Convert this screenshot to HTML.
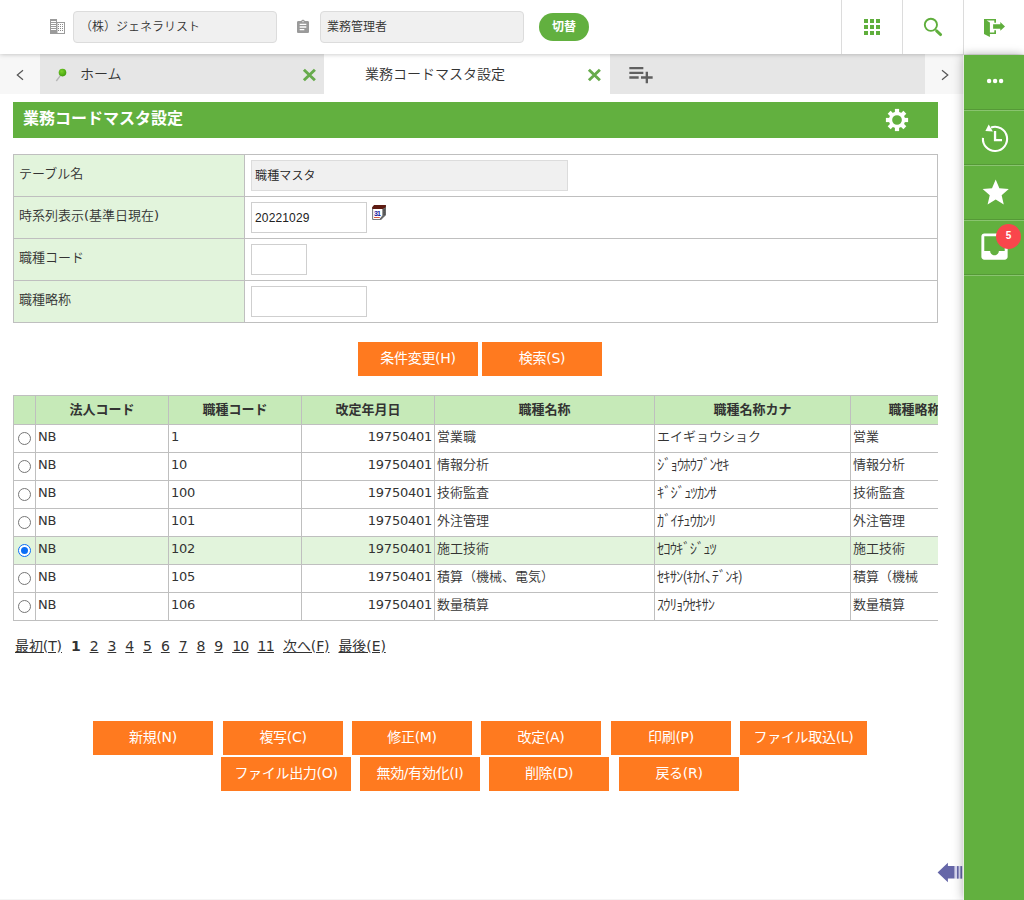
<!DOCTYPE html>
<html lang="ja">
<head>
<meta charset="utf-8">
<title>業務コードマスタ設定</title>
<style>
*{box-sizing:border-box;margin:0;padding:0}
html,body{width:1024px;height:900px;overflow:hidden;background:#fff}
body{font-family:"Liberation Sans","Noto Sans CJK JP",sans-serif;color:#333;font-size:13px;position:relative}
.abs{position:absolute}
/* header */
#hdr{position:absolute;left:0;top:0;width:1024px;height:54px;background:#fff;z-index:5;box-shadow:0 0 5px rgba(0,0,0,.26)}
.hin{position:absolute;top:11px;height:32px;background:#f0f0f0;border:1px solid #dcdcdc;border-radius:4px;font-size:12px;line-height:30px;padding-left:6px;color:#333;white-space:nowrap}
#sw{position:absolute;left:539px;top:13px;width:50px;height:28px;border-radius:14px;background:#62b03f;color:#fff;font-weight:bold;font-size:12px;line-height:29px;text-align:center}
.vdiv{position:absolute;top:0;width:1px;height:54px;background:#dcdcdc}
/* tab bar */
#tabs{position:absolute;left:0;top:54px;width:964px;height:40px;background:#e6e6e6;z-index:2}
.nav{position:absolute;top:0;width:40px;height:40px;background:#f7f7f7}
.tab{position:absolute;top:0;height:40px;font-size:15px;line-height:41.5px;color:#333;white-space:nowrap}
/* sidebar */
#side{position:absolute;left:964px;top:55px;width:60px;height:845px;background:#62b03f;z-index:6;box-shadow:-2px 0 10px rgba(0,0,0,.22),0 -2px 6px rgba(0,0,0,.08)}
#sin{position:absolute;left:0;top:-1px;width:60px;height:846px}
#side:before{content:"";position:absolute;left:-1px;top:0;width:1px;height:846px;background:rgba(235,245,228,.75)}
.sdiv{position:absolute;left:0;width:60px;height:2px;background:linear-gradient(rgba(0,0,0,.13) 50%,rgba(255,255,255,.25) 50%)}
/* title */
#ttl{position:absolute;left:13px;top:102px;width:925px;height:36px;background:#62b03f;color:#fff;font-weight:bold;font-size:16px;line-height:33px;padding-left:10px}

/* form */
#frm{position:absolute;left:13px;top:154px;width:925px;height:169px;border:1px solid #bfbfbf;background:#fff}
.fr{position:absolute;left:0;width:923px;height:42px;border-top:1px solid #bfbfbf}
.fl{position:absolute;left:0;top:0;width:231px;height:41px;background:#e2f4dc;border-right:1px solid #bfbfbf;font-size:13px;line-height:37.5px;padding-left:5px;color:#333;white-space:nowrap;font-family:"DejaVu Sans","Liberation Sans","Noto Sans CJK JP",sans-serif}
.fi{position:absolute;top:5px;height:31px;border:1px solid #cfcfcf;background:#fff;font-size:12px;line-height:30px;padding-left:3px;letter-spacing:0.15px;color:#222;white-space:nowrap}
.ob{position:absolute;height:34px;background:#ff7a1f;color:#fff;font-size:14px;line-height:32px;text-align:center;white-space:nowrap;font-family:"DejaVu Sans","Liberation Sans","Noto Sans CJK JP",sans-serif;letter-spacing:-0.3px}

/* grid */
#gw{position:absolute;left:13px;top:395px;width:925px;height:227px;overflow:hidden}
#grid{border-collapse:collapse;table-layout:fixed;width:1100px;font-size:13px;color:#333;font-family:"DejaVu Sans","Liberation Sans","Noto Sans CJK JP",sans-serif}
#grid th{height:29px;background:#c6eab8;border:1px solid #bfbfbf;font-weight:bold;font-size:13px;text-align:center;padding:0 0 4px 0;letter-spacing:0;white-space:nowrap;overflow:hidden}
#grid td{height:28px;border:1px solid #bfbfbf;padding:0 2px 4px 2px;white-space:nowrap;overflow:hidden;vertical-align:middle;font-size:13px}
#grid td.r{text-align:right}
#grid td:nth-child(-n+4){letter-spacing:-0.25px}
#grid td:nth-child(n+5){padding-bottom:7px}
#grid tr.sel td{background:#e2f4dc}
.rad{display:block;width:13px;height:13px;border:1px solid #767676;border-radius:50%;background:#fff;margin:0 0 1px 4px}
.rad.on{border:1px solid #0b6ef5;position:relative}
.rad.on:after{content:"";position:absolute;left:2px;top:2px;width:7px;height:7px;border-radius:50%;background:#0b6ef5}
#grid td.hk{font-size:14.5px;letter-spacing:-0.9px;padding-bottom:6px}
/* pager */
#pg{position:absolute;left:15px;top:634.7px;font-size:14px;line-height:22px;color:#333;white-space:nowrap;font-family:"DejaVu Sans","Liberation Sans","Noto Sans CJK JP",sans-serif;letter-spacing:-0.1px}
#pg span{text-decoration:underline;margin-right:9px}
#pg b{margin-right:9px;text-decoration:none}

/* lighter CJK weight where text is CJK-only (Meiryo-like thin strokes) */
.hin,.tab,.fl,.fi,#grid td:nth-child(n+5){font-weight:350}
.w4{font-weight:400}
#grid td.hk{font-family:"Noto Sans CJK JP",sans-serif}
</style>
</head>
<body>
<div id="hdr">
  <div class="hin" style="left:73px;width:204px">（株）ジェネラリスト</div>
  <div class="hin" style="left:320px;width:204px">業務管理者</div>
  <div id="sw">切替</div>

  <svg class="abs" style="left:50px;top:19px" width="15" height="15" viewBox="0 0 15 15"><rect x="0" y="0" width="7" height="15" fill="#9b9b9b"/><g fill="#fff"><rect x="1" y="2" width="5" height="1"/><rect x="1" y="4" width="5" height="1"/><rect x="1" y="6" width="5" height="1"/><rect x="1" y="8" width="5" height="1"/><rect x="1" y="10" width="5" height="1"/></g><rect x="7" y="3.5" width="7.5" height="11" fill="#fff" stroke="#9b9b9b" stroke-width="1"/><g fill="#8a8a8a"><rect x="8" y="5" width="1" height="1"/><rect x="10" y="5" width="1" height="1"/><rect x="12" y="5" width="1" height="1"/><rect x="8" y="7" width="1" height="1"/><rect x="10" y="7" width="1" height="1"/><rect x="12" y="7" width="1" height="1"/><rect x="8" y="9" width="1" height="1"/><rect x="10" y="9" width="1" height="1"/><rect x="12" y="9" width="1" height="1"/><rect x="8" y="11" width="1" height="1"/><rect x="10" y="11" width="1" height="1"/><rect x="12" y="11" width="1" height="1"/></g></svg>
  <svg class="abs" style="left:295px;top:19.3px" width="16" height="16" viewBox="0 0 24 24"><path fill="#9a9a9a" d="M19 3h-4.18C14.4 1.84 13.3 1 12 1c-1.3 0-2.4.84-2.82 2H5c-1.1 0-2 .9-2 2v14c0 1.1.9 2 2 2h14c1.1 0 2-.9 2-2V5c0-1.1-.9-2-2-2zm-7 0c.55 0 1 .45 1 1s-.45 1-1 1-1-.45-1-1 .45-1 1-1zm2 14H7v-2h7v2zm3-4H7v-2h10v2zm0-4H7V7h10v2z"/></svg>
  <svg class="abs" style="left:860px;top:15px" width="24" height="24" viewBox="0 0 24 24"><g fill="#5fae3c"><rect x="4" y="4" width="4" height="4"/><rect x="10" y="4" width="4" height="4"/><rect x="16" y="4" width="4" height="4"/><rect x="4" y="10" width="4" height="4"/><rect x="10" y="10" width="4" height="4"/><rect x="16" y="10" width="4" height="4"/><rect x="4" y="16" width="4" height="4"/><rect x="10" y="16" width="4" height="4"/><rect x="16" y="16" width="4" height="4"/></g></svg>
  <svg class="abs" style="left:917px;top:10px" width="32" height="34" viewBox="0 0 32 34"><circle cx="13.9" cy="14.8" r="6.1" fill="none" stroke="#5fae3c" stroke-width="1.9"/><path d="M19.6 20.9 L23.6 24.6" stroke="#5fae3c" stroke-width="2.9" stroke-linecap="round"/></svg>
  <svg class="abs" style="left:978px;top:10px" width="32" height="34" viewBox="0 0 32 34"><path fill="#5fae3c" d="M6 8.9 H18 V12.7 H16.3 V10.6 H8.6 L11.9 12.6 V22.4 H16.3 V20.2 H18 V24.1 H11.9 V27 L6 24.1 Z"/><path fill="#5fae3c" d="M15.1 14.2 H22.3 V12.1 L27 16.4 L22.3 20.7 V18.7 H15.1 Z"/></svg>
  <div class="vdiv" style="left:841px"></div>
  <div class="vdiv" style="left:902px"></div>
  <div class="vdiv" style="left:963px"></div>
</div>
<div id="tabs">
  <div class="nav" style="left:0"></div>
  <div class="tab" style="left:40px;width:284px;padding-left:40px;font-size:14px">ホーム</div>
  <div class="tab" style="left:324px;width:286px;background:#fff;padding-left:41px;font-size:14px">業務コードマスタ設定</div>
  <div class="nav" style="left:925px;width:39px"></div>
  <svg class="abs" style="left:0;top:0" width="40" height="40" viewBox="0 0 40 40"><path d="M23 16.2 L17.3 21 L23 25.8" fill="none" stroke="#555" stroke-width="1.2"/></svg>
  <svg class="abs" style="left:924px;top:0" width="39" height="40" viewBox="0 0 39 40"><path d="M18 16.2 L23.8 21 L18 25.8" fill="none" stroke="#555" stroke-width="1.2"/></svg>
  <svg class="abs" style="left:52px;top:12px" width="18" height="18" viewBox="0 0 18 18"><defs><radialGradient id="pg1" cx="40%" cy="35%" r="70%"><stop offset="0" stop-color="#7ad12a"/><stop offset="1" stop-color="#3f9a0c"/></radialGradient></defs><path d="M9.3 8.3 L4.3 15" stroke="#b5b5b5" stroke-width="1.3"/><circle cx="10.5" cy="6.6" r="3.8" fill="url(#pg1)"/></svg>
  <svg class="abs" style="left:302px;top:14px" width="15" height="14" viewBox="0 0 15 14"><path d="M1.9 1.7 L12.9 12.3 M12.9 1.7 L1.9 12.3" stroke="#67ab4c" stroke-width="2.9"/></svg>
  <svg class="abs" style="left:587px;top:14px" width="15" height="14" viewBox="0 0 15 14"><path d="M1.9 1.7 L12.9 12.3 M12.9 1.7 L1.9 12.3" stroke="#67ab4c" stroke-width="2.9"/></svg>
  <svg class="abs" style="left:626.7px;top:6.1px" width="28" height="28" viewBox="0 0 24 24"><path fill="#606060" d="M14 10H2v2h12v-2zm0-4H2v2h12V6zm4 8v-4h-2v4h-4v2h4v4h2v-4h4v-2h-4zM2 16h8v-2H2v2z"/></svg>

</div>
<div id="side"><div id="sin">
  <svg class="abs" style="left:-1px;top:0" width="61" height="230" viewBox="0 0 61 230"><g fill="#fff"><circle cx="26.1" cy="27" r="2.2"/><circle cx="32.1" cy="27" r="2.2"/><circle cx="38.1" cy="27" r="2.2"/></g>
  <g fill="none" stroke="#fff" stroke-width="2.1"><path d="M28 73.5 A12.1 12.1 0 1 1 19.95 83.85"/><path d="M32.05 76.9 V86.1 H39" stroke-width="2.3"/></g><path fill="#fff" d="M22.4 77 L25.7 70.5 L29.9 77.4 Z"/></svg>
  <svg class="abs" style="left:15.9px;top:123px" width="31.4" height="31.4" viewBox="0 0 24 24"><path fill="#fff" d="M12 17.27L18.18 21l-1.64-7.03L22 9.24l-7.19-.61L12 2 9.19 8.63 2 9.24l5.46 4.73L5.82 21z"/></svg>
  <svg class="abs" style="left:13.1px;top:175px" width="35" height="35" viewBox="0 0 24 24"><path fill="#fff" d="M19 3H4.99c-1.11 0-1.98.89-1.98 2L3 19c0 1.1.88 2 1.99 2H19c1.1 0 2-.9 2-2V5c0-1.11-.9-2-2-2zm0 12h-4c0 1.66-1.35 3-3 3s-3-1.34-3-3H4.99V5H19v10z"/></svg>
  <div class="abs" style="left:32.1px;top:170px;width:25px;height:25px;border-radius:50%;background:#f9464c;color:#fff;font-size:10px;font-weight:bold;line-height:24.5px;text-align:center;font-family:'Liberation Sans',sans-serif">5</div>

  <div class="sdiv" style="top:55px"></div>
  <div class="sdiv" style="top:110px"></div>
  <div class="sdiv" style="top:165px"></div>
  <div class="sdiv" style="top:220px"></div>
</div></div>
<div id="ttl">業務コードマスタ設定</div>
<div id="frm">
  <div class="fr" style="top:0;border-top:none;height:41px"><div class="fl" style="height:41px;line-height:38px">テーブル名</div><div class="fi" style="left:237px;width:317px;background:#f0f0f0;border-color:#dcdcdc;font-size:12px;top:5px">職種マスタ</div></div>
  <div class="fr" style="top:41px"><div class="fl">時系列表示<span class="w4">(</span>基準日現在<span class="w4">)</span></div><div class="fi" style="left:237px;width:116px">20221029</div></div>
  <div class="fr" style="top:83px"><div class="fl">職種コード</div><div class="fi" style="left:237px;width:56px"></div></div>
  <div class="fr" style="top:125px"><div class="fl">職種略称</div><div class="fi" style="left:237px;width:116px"></div></div>
</div>
<div class="ob" style="left:358px;top:342px;width:120px">条件変更(H)</div>
<div class="ob" style="left:482px;top:342px;width:120px">検索(S)</div>
<svg class="abs" style="left:885px;top:108px" width="24" height="24" viewBox="-12 -12 24 24"><g fill="#fff"><rect x="-2.1" y="-11.1" width="4.2" height="5" transform="rotate(0)"/><rect x="-2.1" y="-11.1" width="4.2" height="5" transform="rotate(45)"/><rect x="-2.1" y="-11.1" width="4.2" height="5" transform="rotate(90)"/><rect x="-2.1" y="-11.1" width="4.2" height="5" transform="rotate(135)"/><rect x="-2.1" y="-11.1" width="4.2" height="5" transform="rotate(180)"/><rect x="-2.1" y="-11.1" width="4.2" height="5" transform="rotate(225)"/><rect x="-2.1" y="-11.1" width="4.2" height="5" transform="rotate(270)"/><rect x="-2.1" y="-11.1" width="4.2" height="5" transform="rotate(315)"/></g><circle r="6.5" fill="none" stroke="#fff" stroke-width="3.3"/></svg>
<svg class="abs" style="left:372px;top:204px" width="15" height="16" viewBox="0 0 15 16"><path d="M0.3 3.2 L2.2 0.9 H13.8 V11 L9 15.8 H0.3 Z" fill="#4d4d4d"/><path d="M0.3 3.2 L2.2 0.9 H13.8 V3.2 L11 5 H0.3 Z" fill="#5e1b12"/><path d="M1.1 5 H10.6 V11.5 L7.8 14.9 H1.1 Z" fill="#fff"/><path d="M10.6 5 L13.8 3.2 V11 L9 15.8 L7.8 14.9 L10.6 11.5 Z" fill="#6a6a6a"/><g fill="#2b2b2b"><rect x="11.6" y="5.6" width="1" height="1"/><rect x="11.6" y="7.6" width="1" height="1"/><rect x="11.6" y="9.6" width="1" height="1"/></g><rect x="2" y="13.1" width="5.8" height="0.9" fill="#d8452a"/><text x="1.9" y="11.9" font-family="'Liberation Sans',sans-serif" font-weight="bold" font-size="7" fill="#1616a0" letter-spacing="-0.7">31</text></svg>
<!--FORM-->
<div id="gw"><table id="grid"><colgroup><col style="width:22px"><col style="width:133px"><col style="width:133px"><col style="width:133px"><col style="width:220px"><col style="width:196px"><col style="width:128px"><col style="width:135px"></colgroup>
<tr><th></th><th>法人コード</th><th>職種コード</th><th>改定年月日</th><th>職種名称</th><th>職種名称カナ</th><th>職種略称</th><th></th></tr>
<tr><td style="padding:0"><span class="rad"></span></td><td>NB</td><td>1</td><td class="r">19750401</td><td>営業職</td><td>エイギョウショク</td><td>営業</td><td></td></tr>
<tr><td style="padding:0"><span class="rad"></span></td><td>NB</td><td>10</td><td class="r">19750401</td><td>情報分析</td><td class="hk">ｼﾞｮｳﾎｳﾌﾞﾝｾｷ</td><td>情報分析</td><td></td></tr>
<tr><td style="padding:0"><span class="rad"></span></td><td>NB</td><td>100</td><td class="r">19750401</td><td>技術監査</td><td class="hk">ｷﾞｼﾞｭﾂｶﾝｻ</td><td>技術監査</td><td></td></tr>
<tr><td style="padding:0"><span class="rad"></span></td><td>NB</td><td>101</td><td class="r">19750401</td><td>外注管理</td><td class="hk">ｶﾞｲﾁｭｳｶﾝﾘ</td><td>外注管理</td><td></td></tr>
<tr class="sel"><td style="padding:0"><span class="rad on"></span></td><td>NB</td><td>102</td><td class="r">19750401</td><td>施工技術</td><td class="hk">ｾｺｳｷﾞｼﾞｭﾂ</td><td>施工技術</td><td></td></tr>
<tr><td style="padding:0"><span class="rad"></span></td><td>NB</td><td>105</td><td class="r">19750401</td><td>積算（機械、電気）</td><td class="hk">ｾｷｻﾝ(ｷｶｲ､ﾃﾞﾝｷ)</td><td>積算（機械</td><td></td></tr>
<tr><td style="padding:0"><span class="rad"></span></td><td>NB</td><td>106</td><td class="r">19750401</td><td>数量積算</td><td class="hk">ｽｳﾘｮｳｾｷｻﾝ</td><td>数量積算</td><td></td></tr>
</table></div>
<div id="pg"><span>最初(T)</span><b>1</b><span>2</span><span>3</span><span>4</span><span>5</span><span>6</span><span>7</span><span>8</span><span>9</span><span style="letter-spacing:-0.7px">10</span><span style="letter-spacing:-0.7px">11</span><span>次へ(F)</span><span>最後(E)</span></div>
<!--GRID-->
<div class="ob" style="left:93px;top:721px;width:120px">新規(N)</div>
<div class="ob" style="left:223px;top:721px;width:120px">複写(C)</div>
<div class="ob" style="left:352px;top:721px;width:120px">修正(M)</div>
<div class="ob" style="left:481px;top:721px;width:120px">改定(A)</div>
<div class="ob" style="left:611px;top:721px;width:120px">印刷(P)</div>
<div class="ob" style="left:740px;top:721px;width:127px">ファイル取込(L)</div>
<div class="ob" style="left:221px;top:757px;width:130px">ファイル出力(O)</div>
<div class="ob" style="left:360px;top:757px;width:120px">無効/有効化(I)</div>
<div class="ob" style="left:489px;top:757px;width:120px">削除(D)</div>
<div class="ob" style="left:619px;top:757px;width:120px">戻る(R)</div>
<div class="abs" style="left:0;top:897px;width:963px;height:1px;background:#f4f4f4;top:899px"></div>
<svg class="abs" style="left:936px;top:861px" width="28" height="24" viewBox="0 0 28 24"><rect x="18.5" y="5.1" width="8" height="12.5" fill="#d9d9f2"/><path fill="#6667a8" d="M1.6 11.5 L11.9 1.8 V5.1 H18.5 V17.6 H11.9 V21.2 Z"/><rect x="21" y="5.1" width="1.6" height="12.5" fill="#6667a8"/><rect x="24.4" y="5.1" width="1.7" height="12.5" fill="#6667a8"/></svg>
<!--BUTTONS-->
</body>
</html>
